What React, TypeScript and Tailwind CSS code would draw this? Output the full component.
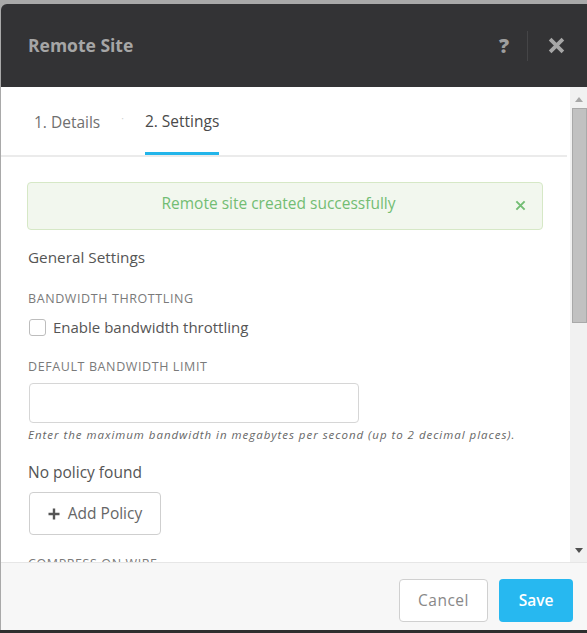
import React from 'react'

const font = { fontFamily: '"Open Sans", Lato, sans-serif' }

function CloseIcon({ className, stroke = 3.5 }: { className?: string; stroke?: number }) {
  return (
    <svg viewBox="0 0 16 16" className={className} fill="none">
      <path d="M2 2 L14 14 M14 2 L2 14" stroke="currentColor" strokeWidth={stroke} strokeLinecap="butt" />
    </svg>
  )
}

function Label({ children }: { children: React.ReactNode }) {
  return <div className="text-[12.5px] leading-[16px] uppercase text-[#7a7a7a] tracking-[0.6px]">{children}</div>
}

export default function App() {
  return (
    <div className="w-[587px] h-[633px] flex flex-col bg-[#a9a9a9] overflow-hidden" style={font}>
      <div className="h-[4px] shrink-0" />
      <div className="flex-1 flex flex-col ml-[1px] min-h-0">
        {/* header */}
        <div className="h-[83px] shrink-0 bg-[#333335] rounded-tl-[6px] flex items-center pl-[27px] pr-[22px]">
          <div className="text-[17.5px] font-bold text-[#a6a6a6]">Remote Site</div>
          <div className="ml-auto flex items-center">
            <span className="text-[20px] font-extrabold text-[#9e9e9e] leading-none mr-[18px]">?</span>
            <div className="w-px h-[30px] bg-[#454547] mr-[20px]" />
            <CloseIcon className="w-[17px] h-[17px] text-[#a6a6a6]" />
          </div>
        </div>

        {/* body */}
        <div className="h-[475px] shrink-0 flex bg-white">
          <div className="flex-1 overflow-hidden">
            <div className="h-[68px] flex items-end pl-[33px] mr-[3px]">
              <div className="pb-[23px] text-[15.5px] leading-[20px] text-[#6f6f6f]">1. Details</div>
              <div className="pb-[32px] mx-[21px] text-[#d0d0d0] text-[10px] leading-none">·</div>
              <div className="pb-[21px] text-[15.5px] leading-[20px] text-[#4a4a4a] border-b-[3px] border-[#22b5ea]">2. Settings</div>
            </div>
            <div className="h-[2px] bg-[#ebebeb] mr-[3px]" />

            <div className="pl-[27px] pr-[27px]">
              <div className="mt-[25px] -ml-[1px] h-[48px] rounded-[4px] border border-[#d6e8c6] bg-[#f2f7ee] flex items-center pl-[14px] pr-[16px]">
                <div className="flex-1 text-center text-[15.5px] text-[#72bd73] -mt-[4px]">Remote site created successfully</div>
                <CloseIcon className="w-[11px] h-[11px] text-[#72bd73] -mt-[2px]" stroke={2.8} />
              </div>

              <div className="mt-[17px] text-[15.3px] leading-[20px] text-[#555]">General Settings</div>

              <div className="mt-[24px]">
                <Label>Bandwidth Throttling</Label>
              </div>
              <div className="mt-[10px] flex items-center leading-[20px]">
                <div className="w-[17px] h-[17px] rounded-[3px] border border-[#bdbdbd] bg-white ml-[1px]" />
                <span className="ml-[7px] text-[15px] text-[#555]">Enable bandwidth throttling</span>
              </div>

              <div className="mt-[22px]">
                <Label>Default Bandwidth Limit</Label>
              </div>
              <div className="mt-[8px] ml-[1px] w-[330px] h-[40px] rounded-[4px] border border-[#d6d6d6] bg-white" />
              <div className="mt-[4px] text-[11.5px] leading-[16px] italic text-[#666] tracking-[0.97px]">
                Enter the maximum bandwidth in megabytes per second (up to 2 decimal places).
              </div>

              <div className="mt-[19px] text-[15.5px] leading-[20px] text-[#555]">No policy found</div>
              <button className="mt-[10px] ml-[1px] w-[132px] h-[43px] rounded-[4px] border border-[#cfcfcf] bg-white flex items-center justify-center gap-[8px] text-[15.5px] text-[#666]">
                <svg viewBox="0 0 12 12" className="w-[12px] h-[12px]">
                  <path d="M6 0.5 V11.5 M0.5 6 H11.5" stroke="#555" strokeWidth="2.4" />
                </svg>
                Add Policy
              </button>

              <div className="mt-[21px]">
                <Label>Compress on wire</Label>
              </div>
            </div>
          </div>

          {/* scrollbar */}
          <div className="w-[17px] shrink-0 bg-[#f1f1f1] flex flex-col items-center">
            <svg viewBox="0 0 8 5" className="w-[8px] h-[5px] mt-[10px]">
              <path d="M0 5 L4 0 L8 5 Z" fill="#a8a8a8" />
            </svg>
            <div className="mt-[6px] ml-[2px] w-[15px] h-[215px] bg-[#c1c1c1] border border-[#a9a9a9]" />
            <svg viewBox="0 0 8 5" className="w-[8px] h-[5px] mt-auto mb-[9px]">
              <path d="M0 0 L8 0 L4 5 Z" fill="#505050" />
            </svg>
          </div>
        </div>

        {/* footer */}
        <div className="flex-1 bg-[#f7f7f7] border-t border-[#e6e6e6] flex justify-end items-start pt-[16px] pr-[14px] gap-[11px]">
          <button className="w-[89px] h-[43px] rounded-[4px] border border-[#d0d0d0] bg-white text-[15.5px] text-[#888] tracking-[0.5px]">Cancel</button>
          <button className="w-[74px] h-[43px] rounded-[4px] bg-[#27b8f0] text-[15.5px] font-semibold text-white">Save</button>
        </div>
      </div>
      <div className="h-[3px] shrink-0 bg-[#2e2e2e]" />
    </div>
  )
}
